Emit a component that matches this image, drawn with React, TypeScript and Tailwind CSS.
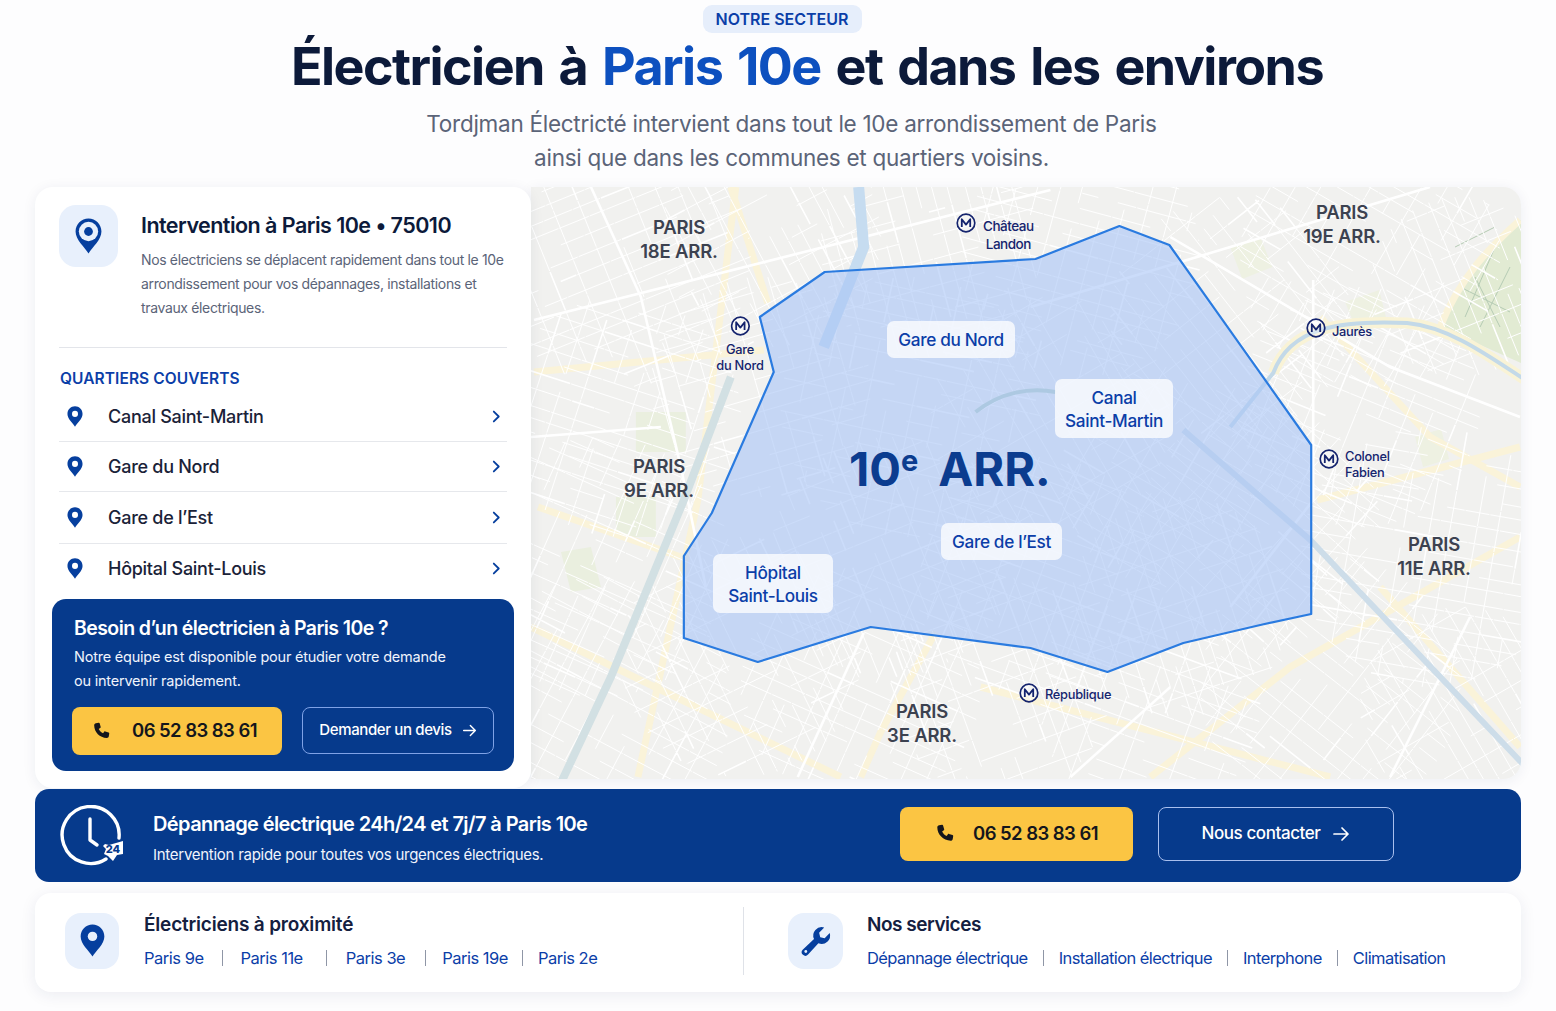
import React from "react";

const font = { fontFamily: '"Inter","Liberation Sans",sans-serif' };

function rng(seed: number) {
  let s = seed;
  return () => {
    s = (s * 16807) % 2147483647;
    return (s - 1) / 2147483646;
  };
}

const regions: [number, number, number, number][] = [
  [90, 70, 130, -22], [240, 50, 110, 62], [90, 230, 120, 18], [230, 200, 110, -16],
  [70, 380, 130, 24], [70, 520, 130, 28], [210, 470, 120, 64], [330, 500, 120, 24],
  [470, 500, 110, 70], [620, 520, 110, 20], [800, 500, 130, 38], [930, 520, 100, 60],
  [900, 370, 130, 10], [730, 340, 120, 42], [830, 220, 120, 22], [700, 130, 120, 52],
  [840, 70, 130, 30], [930, 100, 90, 68], [550, 70, 120, 15], [400, 60, 110, 75],
  [380, 220, 130, 12], [520, 230, 120, 60], [640, 290, 110, 30], [360, 370, 120, 68],
  [510, 390, 120, 20], [650, 420, 110, 72],
];

function streets() {
  const r = rng(4217);
  let thin = "";
  let mid = "";
  for (const [cx, cy, rad, ang] of regions) {
    for (const off of [0, 90]) {
      const a = ((ang + off) * Math.PI) / 180;
      const ux = Math.cos(a), uy = Math.sin(a);
      const vx = -uy, vy = ux;
      const gap = off === 0 ? 11 : 20;
      for (let d = -rad; d < rad; d += gap + r() * 7) {
        const half = Math.sqrt(Math.max(0, rad * rad - d * d));
        let t = -half;
        while (t < half) {
          const len = 14 + r() * 45;
          const end = Math.min(t + len, half);
          if (r() > 0.3) {
            const x1 = cx + vx * d + ux * t, y1 = cy + vy * d + uy * t;
            const x2 = cx + vx * d + ux * end, y2 = cy + vy * d + uy * end;
            const seg = `M${x1.toFixed(1)} ${y1.toFixed(1)}L${x2.toFixed(1)} ${y2.toFixed(1)}`;
            if (r() > 0.9) mid += seg; else thin += seg;
          }
          t = end + 1;
        }
      }
    }
  }
  return { thin, mid };
}

const { thin, mid } = streets();
const poly = "229,130 294,85 505,72 589,39 639,58 781,258 781,427 730,438 653,456 577,485 500,461 340,440 227,475 153,451 153,369 181,326 243,185";

const yellow = [
  "M200 0L237 116", "M3 185L233 163", "M0 440L310 590", "M7 320L150 370", "M107 590L167 313L205 0",
  "M787 313L990 260", "M910 140C930 90 960 60 990 33", "M330 590L350 545L405 445",
  "M620 590L760 480L990 350", "M450 500L800 590",
  "M790 130L900 250L990 300", "M850 400L990 560",
];
const white = [
  "M3 133L520 3", "M267 590L333 446", "M60 0L110 110L150 280L175 400", "M783 93V313",
  "M500 120L900 0", "M640 50L860 180L990 230", "M540 590L640 500",
  "M860 590L940 430", "M783 313L700 420", "M0 250L130 240",
];

function MapArt() {
  return (
    <>
      <svg viewBox="0 0 991 592" className="absolute inset-0 w-full h-full blur-[0.5px]" preserveAspectRatio="none">
        <rect width="991" height="592" fill="#f1f1ef" />
        <path d="M910 140C930 90 960 60 991 33V176L910 140Z" fill="#e2ebd3" />
        <path d="M85 310h40v40h-40zM105 225h50v40h-50zM30 365l30-5 10 40-30 5z" fill="#eaefdf" />
        <path d="M700 60l30-10 12 30-30 12zM815 115l34-12 8 32-30 10zM885 250l26-8 8 30-26 8z" fill="#eef1e2" />
        <path d="M925 60l40-20M935 130l30-70M950 140l30-60M930 100l50 25M945 90l25 50" stroke="#b5cbb4" strokeWidth="1" fill="none" />
        <g fill="none">
          {yellow.map((d) => <path key={d} d={d} stroke="#faf3d9" strokeWidth="7" />)}
          <path d={thin} stroke="#ffffff" strokeWidth="1" />
          <path d={mid} stroke="#ffffff" strokeWidth="1.600" />
          {white.map((d) => <path key={d} d={d} stroke="#ffffff" strokeWidth="2.600" />)}
          <path d="M28 600L80 490L153 313L200 190" stroke="#d2e0e3" strokeWidth="8" />
          <path d="M328 0L333 60L293 160" stroke="#c6dcf0" strokeWidth="11" />
          <path d="M743 186C760 140 810 133 877 136C920 140 960 170 1000 196" stroke="#f9f3d6" strokeWidth="11" />
          <path d="M700 240L743 186C760 140 810 133 877 136C920 140 960 170 1000 196" stroke="#c3d9e8" strokeWidth="4" />
          <path d="M653 243L780 353L1010 595" stroke="#cddde9" strokeWidth="6" />
          <path d="M445 225C470 205 500 200 525 205" stroke="#b4d0c2" strokeWidth="4" />
        </g>
      </svg>
      <svg viewBox="0 0 991 592" className="absolute inset-0 w-full h-full" preserveAspectRatio="none">
        <polygon points={poly} fill="#a9c5f6" fillOpacity="0.6" stroke="#2a7be0" strokeWidth="2.200" strokeLinejoin="round" />
      </svg>
    </>
  );
}

function Metro() {
  return (
    <svg viewBox="0 0 20 20" className="w-[20px] h-[20px] shrink-0">
      <circle cx="10" cy="10" r="8.800" fill="#ffffff" fillOpacity="0.35" stroke="#15246e" strokeWidth="1.700" />
      <path d="M5.800 14V6.200L10 11.600l4.200-5.400V14" fill="none" stroke="#15246e" strokeWidth="1.800" strokeLinejoin="round" />
    </svg>
  );
}

function Pin({ className = "", hole = "#e8f0fc", ring = false }: { className?: string; hole?: string; ring?: boolean }) {
  return (
    <svg viewBox="0 0 24 32" className={className}>
      <path d="M12 0.500C5.600 0.500 0.500 5.600 0.500 12c0 7.500 8 13.600 11.500 19.500C15.500 25.600 23.500 19.500 23.500 12 23.500 5.600 18.400 0.500 12 0.500Z" fill="#063f9e" />
      {ring ? (
        <>
          <circle cx="12" cy="12" r="8.600" fill={hole} />
          <circle cx="12" cy="12" r="3.900" fill="#063f9e" />
        </>
      ) : (
        <circle cx="12" cy="12" r="4.600" fill={hole} />
      )}
    </svg>
  );
}

function Phone({ className = "" }: { className?: string }) {
  return (
    <svg viewBox="0 0 24 24" className={className}>
      <path d="M5.200 1.600 8.900 1c.6-.1 1.100.2 1.300.8l1.400 4.700c.2.500 0 1-.4 1.300L9 9.400c1 2.300 3.300 4.700 5.700 5.700l1.600-2.200c.3-.4.800-.6 1.300-.4l4.600 1.400c.6.200.9.700.8 1.300l-.6 3.700c-.2 1.300-1.300 2.300-2.600 2.300C10.300 20.700 3 13.600 2.900 4.200c0-1.300 1-2.400 2.300-2.600Z" fill="#14161c" />
    </svg>
  );
}

function Arrow({ className = "" }: { className?: string }) {
  return (
    <svg viewBox="0 0 18 18" className={className} fill="none" stroke="#ffffff" strokeWidth="1.700" strokeLinecap="round" strokeLinejoin="round">
      <path d="M2 9h14M10 3l6 6-6 6" />
    </svg>
  );
}

function Chevron() {
  return (
    <svg viewBox="0 0 10 14" className="w-[9px] h-[13px]" fill="none" stroke="#063f9e" strokeWidth="2" strokeLinecap="round" strokeLinejoin="round">
      <path d="M2 1.500 7.500 7 2 12.500" />
    </svg>
  );
}

function ClockIcon() {
  return (
    <svg viewBox="0 0 66 62" className="w-[66px] h-[62px] shrink-0" fill="none">
      <path d="M46 54A28.500 28.500 0 1 1 59 33" stroke="#ffffff" strokeWidth="3.400" strokeLinecap="round" />
      <path d="M30 14v21l7 5" stroke="#ffffff" strokeWidth="3.400" strokeLinecap="round" strokeLinejoin="round" />
      <path d="M45 39l4 1 14-4v13l-6 1-4 6-5-5-4-2 2-5-3-3Z" fill="#ffffff" />
      <text x="53" y="48" textAnchor="middle" fontSize="11" fontWeight="800" fill="#063a8c" fontFamily="Inter">24</text>
    </svg>
  );
}

function WrenchIcon() {
  return (
    <svg viewBox="0 0 24 24" className="w-[34px] h-[34px]">
      <path d="M21.700 6.300a6 6 0 0 1-8 7.300L6.400 21.500a2.500 2.500 0 0 1-3.800-3.400l8-7.500a6 6 0 0 1 7.200-8.200l-3.600 3.800.8 3.100 3.100.8 3.600-3.800Z" fill="#063f9e" />
      <circle cx="4.800" cy="19.400" r="1" fill="#e8f0fc" />
    </svg>
  );
}

const rows = [
  { t: "Canal Saint-Martin", cls: "h-[50px]" },
  { t: "Gare du Nord", cls: "h-[50px]" },
  { t: "Gare de l’Est", cls: "h-[52px]" },
  { t: "Hôpital Saint-Louis", cls: "h-[48px]" },
];

const Sep = () => <span className="w-px h-[16px] bg-[#8f96a6] shrink-0" />;

export default function App() {
  return (
    <div style={font} className="w-[1556px] h-[1011px] overflow-hidden bg-[#fdfdfe] flex flex-col items-center pt-[5px]">
      <div className="ml-[8px] h-[28px] w-[159px] rounded-[9px] bg-[#e6eefb] flex items-center justify-center text-[16px] font-semibold text-[#0b3ea8]">
        NOTRE SECTEUR
      </div>
      <h1 className="ml-[58px] mt-[1px] h-[66px] leading-[66px] text-[52px] font-bold tracking-[-0.03em] [word-spacing:4px] text-[#0c1a3a] whitespace-nowrap">
        Électricien à <span className="text-[#0d50bf]">Paris 10e</span> et dans les environs
      </h1>
      <p className="ml-[27px] mt-[7px] text-[22.5px] leading-[34px] text-[#5b6478] text-center tracking-[-0.012em]">
        Tordjman Électricté intervient dans tout le 10e arrondissement de Paris
        <br />
        ainsi que dans les communes et quartiers voisins.
      </p>

      <div className="mt-[12px] w-[1486px] h-[592px] flex shrink-0">
        <aside className="relative z-10 w-[496px] h-[601px] rounded-[18px] bg-white shadow-[0_2px_14px_rgba(20,40,90,0.07)] px-[17px] pb-[17px] flex flex-col">
          <div className="flex pt-[18px] px-[7px] h-[160px]">
            <div className="w-[59px] h-[62px] rounded-[17px] bg-[#e8f0fc] flex items-center justify-center shrink-0">
              <Pin ring className="w-[27px] h-[36px]" />
            </div>
            <div className="ml-[23px]">
              <h2 className="text-[21.5px] leading-[28px] mt-[6px] font-semibold tracking-[-0.025em] text-[#0c1a3a] whitespace-nowrap">Intervention à Paris 10e • 75010</h2>
              <p className="mt-[9px] text-[14px] leading-[24px] tracking-[-0.025em] text-[#5b6478] whitespace-nowrap">
                Nos électriciens se déplacent rapidement dans tout le 10e
                <br />
                arrondissement pour vos dépannages, installations et
                <br />
                travaux électriques.
              </p>
            </div>
          </div>
          <div className="mx-[7px] border-t border-[#e3e5ea]" />
          <div className="ml-[8px] mt-[21px] text-[15.5px] leading-[20px] font-semibold text-[#0b3ea8] tracking-[0.005em]">QUARTIERS COUVERTS</div>
          <ul className="mx-[7px] mt-[3px]">
            {rows.map((r, i) => (
              <li key={r.t} className={r.cls + " flex items-center " + (i < 3 ? "border-b border-[#e6e8ec]" : "")}>
                <Pin hole="#ffffff" className="w-[16px] h-[21px] ml-[8px]" />
                <span className="ml-[25px] text-[18px] font-medium tracking-[-0.015em] text-[#1a2238]">{r.t}</span>
                <span className="ml-auto mr-[6px] flex"><Chevron /></span>
              </li>
            ))}
          </ul>
          <div className="mt-[7px] h-[172px] rounded-[14px] bg-[#063a8c] px-[20px] pt-[16px] text-white">
            <div className="ml-[2px] text-[19.5px] leading-[26px] font-semibold tracking-[-0.03em]">Besoin d’un électricien à Paris 10e ?</div>
            <p className="ml-[2px] mt-[4px] text-[14.5px] leading-[24px] tracking-[-0.015em] text-[#f0f4fc]">
              Notre équipe est disponible pour étudier votre demande
              <br />
              ou intervenir rapidement.
            </p>
            <div className="mt-[14px] flex gap-[20px]">
              <div className="w-[210px] h-[48px] rounded-[8px] bg-[#fbc543] flex items-center pl-[20px]">
                <Phone className="w-[18px] h-[18px]" />
                <span className="ml-[22px] text-[18.5px] font-semibold tracking-[-0.03em] text-[#14161c]">06 52 83 83 61</span>
              </div>
              <div className="w-[192px] h-[47px] rounded-[8px] border border-[#7fa2e6] flex items-center justify-center gap-[10px]">
                <span className="text-[15px] font-medium tracking-[-0.025em]">Demander un devis</span>
                <Arrow className="w-[15px] h-[15px]" />
              </div>
            </div>
          </div>
        </aside>
        <div className="relative flex-1 rounded-r-[18px] overflow-hidden shadow-[0_2px_14px_rgba(20,40,90,0.07)]">
          <MapArt />

          <div className="absolute left-[148px] top-[28px] -translate-x-1/2 text-center text-[18.5px] leading-[24px] font-semibold text-[#3c4250] tracking-[-0.01em] whitespace-nowrap">PARIS<br />18E ARR.</div>
          <div className="absolute left-[811px] top-[13px] -translate-x-1/2 text-center text-[18.5px] leading-[24px] font-semibold text-[#3c4250] tracking-[-0.01em] whitespace-nowrap">PARIS<br />19E ARR.</div>
          <div className="absolute left-[128px] top-[267px] -translate-x-1/2 text-center text-[18.5px] leading-[24px] font-semibold text-[#3c4250] tracking-[-0.01em] whitespace-nowrap">PARIS<br />9E ARR.</div>
          <div className="absolute left-[903px] top-[345px] -translate-x-1/2 text-center text-[18.5px] leading-[24px] font-semibold text-[#3c4250] tracking-[-0.01em] whitespace-nowrap">PARIS<br />11E ARR.</div>
          <div className="absolute left-[391px] top-[512px] -translate-x-1/2 text-center text-[18.5px] leading-[24px] font-semibold text-[#3c4250] tracking-[-0.01em] whitespace-nowrap">PARIS<br />3E ARR.</div>

          <div className="absolute left-[356px] top-[134px] w-[128px] h-[37px] rounded-[7px] bg-white/75 flex items-center justify-center text-[17.2px] font-medium tracking-[-0.02em] text-[#0b3ea8] whitespace-nowrap">Gare du Nord</div>
          <div className="absolute left-[524px] top-[192px] w-[118px] h-[59px] rounded-[7px] bg-white/75 flex items-center justify-center text-center text-[17.2px] leading-[23px] font-medium tracking-[-0.02em] text-[#0b3ea8] whitespace-nowrap">Canal<br />Saint-Martin</div>
          <div className="absolute left-[410px] top-[336px] w-[121px] h-[37px] rounded-[7px] bg-white/75 flex items-center justify-center text-[17.2px] font-medium tracking-[-0.02em] text-[#0b3ea8] whitespace-nowrap">Gare de l’Est</div>
          <div className="absolute left-[182px] top-[367px] w-[120px] h-[59px] rounded-[7px] bg-white/75 flex items-center justify-center text-center text-[17.2px] leading-[23px] font-medium tracking-[-0.02em] text-[#0b3ea8] whitespace-nowrap">Hôpital<br />Saint-Louis</div>

          <div className="absolute left-[318px] top-[252px] h-[60px] -mt-[8px] text-[47px] leading-[60px] font-bold text-[#0b3c8f] whitespace-nowrap">
            10<span className="text-[29px] align-[15px]">e</span><span className="ml-[20px]">ARR.</span>
          </div>

          <div className="absolute left-[425px] top-[26px] flex gap-[7px] text-[13.5px] leading-[18px] font-medium tracking-[-0.035em] text-[#15246e]">
            <Metro />
            <span className="text-center pt-[4px]">Château<br />Landon</span>
          </div>
          <div className="absolute left-[209px] top-[129px] -translate-x-1/2 flex flex-col items-center text-[12.8px] leading-[16px] font-medium tracking-[-0.02em] text-[#15246e] text-center whitespace-nowrap">
            <Metro />
            <span className="mt-[6px]">Gare<br />du Nord</span>
          </div>
          <div className="absolute left-[775px] top-[128px] flex items-center gap-[6px] text-[12.8px] font-medium tracking-[-0.02em] text-[#15246e]">
            <Metro />
            <span className="pt-[7px]">Jaurès</span>
          </div>
          <div className="absolute left-[788px] top-[262px] flex gap-[6px] text-[12.8px] leading-[16px] font-medium tracking-[-0.02em] text-[#15246e]">
            <Metro />
            <span>Colonel<br />Fabien</span>
          </div>
          <div className="absolute left-[488px] top-[495px] flex items-center gap-[6px] text-[12.8px] font-medium tracking-[-0.02em] text-[#15246e]">
            <Metro />
            <span className="pt-[3px]">République</span>
          </div>
        </div>
      </div>

      <div className="relative z-20 mt-[10px] w-[1486px] h-[93px] shrink-0 rounded-[14px] bg-[#063a8c] flex items-center pl-[25px] text-white">
        <ClockIcon />
        <div className="ml-[27px] w-[747px] mt-[3px]">
          <div className="text-[20px] leading-[28px] font-semibold tracking-[-0.03em]">Dépannage électrique 24h/24 et 7j/7 à Paris 10e</div>
          <div className="mt-[7px] text-[15px] leading-[20px] tracking-[-0.018em] text-[#f0f4fc]">Intervention rapide pour toutes vos urgences électriques.</div>
        </div>
        <div className="mb-[4px] w-[233px] h-[54px] rounded-[8px] bg-[#fbc543] flex items-center pl-[35px]">
          <Phone className="w-[19px] h-[19px]" />
          <span className="ml-[19px] text-[18.5px] font-semibold tracking-[-0.03em] text-[#14161c]">06 52 83 83 61</span>
        </div>
        <div className="mb-[4px] ml-[25px] w-[236px] h-[54px] rounded-[8px] border border-[#a8bfee] flex items-center justify-center gap-[12px]">
          <span className="text-[17px] font-medium tracking-[-0.025em]">Nous contacter</span>
          <Arrow className="w-[18px] h-[18px]" />
        </div>
      </div>

      <div className="mt-[11px] pb-[4px] w-[1486px] h-[99px] shrink-0 rounded-[16px] bg-white shadow-[0_3px_16px_rgba(20,40,90,0.08)] flex items-center">
        <div className="flex items-center w-[709px] h-[68px] pl-[30px] border-r border-[#dfe2e8]">
          <div className="w-[54px] h-[56px] rounded-[16px] bg-[#e8f0fc] flex items-center justify-center shrink-0">
            <Pin hole="#e8f0fc" className="w-[25px] h-[33px]" />
          </div>
          <div className="ml-[25px]">
            <div className="text-[19px] leading-[26px] font-semibold tracking-[-0.01em] text-[#14203f]">Électriciens à proximité</div>
            <div className="mt-[8px] flex items-center text-[16.5px] leading-[24px] tracking-[-0.03em] text-[#0b3ea8] whitespace-nowrap">
              <span>Paris 9e</span><span className="ml-[18px] mr-[18px] flex"><Sep /></span>
              <span>Paris 11e</span><span className="ml-[23px] mr-[19px] flex"><Sep /></span>
              <span>Paris 3e</span><span className="ml-[20px] mr-[16px] flex"><Sep /></span>
              <span>Paris 19e</span><span className="ml-[14px] mr-[15px] flex"><Sep /></span>
              <span>Paris 2e</span>
            </div>
          </div>
        </div>
        <div className="flex items-center ml-[44px]">
          <div className="w-[55px] h-[56px] rounded-[16px] bg-[#e8f0fc] flex items-center justify-center shrink-0">
            <WrenchIcon />
          </div>
          <div className="ml-[24px]">
            <div className="text-[19px] leading-[26px] font-semibold tracking-[-0.025em] text-[#14203f]">Nos services</div>
            <div className="mt-[8px] flex items-center text-[16.5px] leading-[24px] tracking-[-0.035em] text-[#0b3ea8] whitespace-nowrap">
              <span>Dépannage électrique</span><span className="mx-[15px] flex"><Sep /></span>
              <span>Installation électrique</span><span className="mx-[15px] flex"><Sep /></span>
              <span>Interphone</span><span className="mx-[15px] flex"><Sep /></span>
              <span>Climatisation</span>
            </div>
          </div>
        </div>
      </div>
    </div>
  );
}
